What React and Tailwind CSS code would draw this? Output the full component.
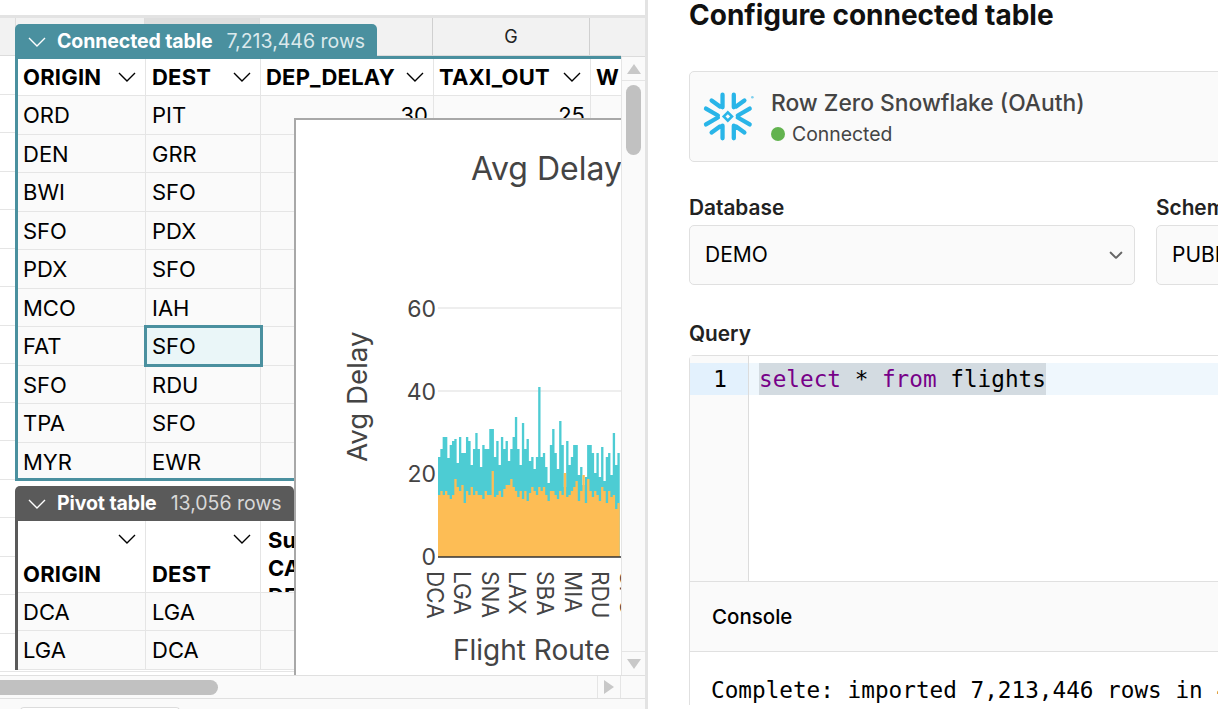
import React from "react";

const rows = [
  ["ORD", "PIT"], ["DEN", "GRR"], ["BWI", "SFO"], ["SFO", "PDX"], ["PDX", "SFO"],
  ["MCO", "IAH"], ["FAT", "SFO"], ["SFO", "RDU"], ["TPA", "SFO"], ["MYR", "EWR"],
];

// bar tops, read off the reference in px above the axis
const tealBars = [
  100, 108, 120, 120, 99, 112, 116, 118, 94, 120, 104, 104, 120, 116, 92, 108, 124, 108, 90, 112,
  108, 108, 128, 128, 100, 116, 92, 120, 108, 116, 96, 108, 120, 140, 108, 92, 134, 108, 118, 96,
  100, 88, 100, 170, 100, 104, 90, 74, 112, 128, 104, 88, 136, 112, 70, 116, 92, 100, 112, 112,
  82, 90, 72, 80, 112, 112, 104, 84, 104, 80, 110, 76, 100, 104, 82, 124, 92, 104,
];
const orangeBars = [
  62, 66, 62, 66, 62, 58, 62, 78, 70, 66, 72, 54, 66, 62, 70, 62, 66, 62, 62, 58,
  66, 62, 62, 86, 60, 62, 66, 60, 68, 72, 72, 78, 70, 66, 60, 66, 58, 66, 56, 64,
  70, 66, 62, 70, 66, 70, 62, 56, 66, 66, 62, 58, 66, 62, 84, 60, 62, 66, 70, 76,
  56, 66, 82, 54, 78, 66, 60, 66, 62, 56, 70, 66, 54, 66, 60, 62, 48, 54,
];

// one stepped outline per series, so no seams show between bars
const stepPath = (bars) => {
  const step = 2.33;
  let d = "M438 557";
  bars.forEach((h, i) => {
    const x = 438 + i * step;
    d += `L${x} ${557 - h}L${x + step} ${557 - h}`;
  });
  return d + `L${438 + bars.length * step} 557Z`;
};

const Chevron = ({ className = "", weight = 1.4 }) => (
  <svg viewBox="0 0 18 10" className={`w-[18px] h-[10px] ${className}`} fill="none" stroke="currentColor" strokeWidth={weight}>
    <polyline points="1,1 9,9 17,1" />
  </svg>
);

const SnowflakeLogo = () => (
  <svg viewBox="28 30 155 160" className="w-[52px] h-[53px] shrink-0" fill="none" stroke="#29b5e8" strokeWidth="13" strokeLinecap="round">
    <path d="M86 44V82M120 44V82M53 62L78 80M152 62L127 80" />
    <path d="M86 176V138M120 176V138M53 158L78 140M152 158L127 140" />
    <path d="M36 86L72 107M36 134L72 113M168 86L132 107M168 134L132 113" />
    <path d="M102 92L120 110L102 128L84 110Z" stroke="none" fill="#29b5e8" />
    <path d="M102 103L109 110L102 117L95 110Z" stroke="none" fill="#fafafa" />
    <circle cx="176" cy="52" r="4" stroke="none" fill="#7fd0ee" />
  </svg>
);

const Cell = ({ className = "", children }) => (
  <div className={`h-full flex items-center pt-[2px] px-[5px] border-r border-[#e5e5e5] overflow-hidden shrink-0 ${className}`}>
    {children}
  </div>
);

const HeaderCell = ({ width, label }) => (
  <div className={`h-full flex items-center justify-between pl-[5px] pr-[9px] border-r border-[#e5e5e5] shrink-0 font-bold tracking-[0.2px] ${width}`}>
    <span>{label}</span>
    <Chevron />
  </div>
);

const ConnectedTable = () => (
  <div className="w-[606px]">
    <div className="w-[362px] h-[32px] pt-[4px] rounded-t-[5px] bg-[#4a909f] flex items-center text-white pl-[13px] text-[19.5px]">
      <Chevron className="mr-[11px]" />
      <span className="font-bold tracking-[-0.1px]">Connected table</span>
      <span className="ml-[14px] text-[#dbe9ec]">7,213,446 rows</span>
    </div>
    <div className="h-[425px] overflow-hidden border-t-[3px] border-l-[3px] border-b-[3px] border-[#4a909f] text-[22px] text-black bg-[#fafafa]">
      <div className="flex h-[37px] bg-white border-b border-[#e5e5e5]">
        <HeaderCell width="w-[128px]" label="ORIGIN" />
        <HeaderCell width="w-[115px] pl-[6px]" label="DEST" />
        <HeaderCell width="w-[173px]" label="DEP_DELAY" />
        <HeaderCell width="w-[157px]" label="TAXI_OUT" />
        <div className="pl-[5px] font-bold flex items-center">W</div>
      </div>
      {rows.map((r, i) => (
        <div key={i} className="flex h-[38.5px] border-b border-[#e5e5e5]">
          <Cell className="w-[128px]">{r[0]}</Cell>
          <Cell className={i === 6 ? "w-[115px] pl-[6px] relative bg-[#eaf6f8] outline-[3px] -outline-offset-1 outline-[#4a909f]" : "w-[115px] pl-[6px]"}>{r[1]}</Cell>
          <Cell className="w-[173px] justify-end">{i === 0 ? "30" : ""}</Cell>
          <Cell className="w-[157px] justify-end">{i === 0 ? "25" : ""}</Cell>
        </div>
      ))}
    </div>
  </div>
);

const PivotTable = () => (
  <div className="w-[279px] mt-[5px]">
    <div className="h-[32px] pt-[4px] rounded-t-[5px] bg-[#5a5a5a] flex items-center text-white pl-[13px] text-[19.5px]">
      <Chevron className="mr-[11px]" />
      <span className="font-bold tracking-[-0.1px]">Pivot table</span>
      <span className="ml-[14px] text-[#d8d8d8]">13,056 rows</span>
    </div>
    <div className="border-t-[3px] border-l-[3px] border-[#5a5a5a] text-[22px] text-black bg-[#fafafa]">
      <div className="flex h-[71.5px] bg-white border-b border-[#e5e5e5] font-bold tracking-[0.2px]">
        {[["ORIGIN", "w-[128px] pl-[5px]"], ["DEST", "w-[115px] pl-[6px]"]].map(([label, w]) => (
          <div key={label} className={`relative h-full flex items-end pb-[1px] border-r border-[#e5e5e5] shrink-0 ${w}`}>
            <Chevron className="absolute right-[9px] top-[13px]" />
            {label}
          </div>
        ))}
        <div className="pl-[7px] pt-[5px] leading-[28px] whitespace-nowrap h-full overflow-hidden">
          Sum of<br />CANCELLED<br />DELAY
        </div>
      </div>
      {[["DCA", "LGA"], ["LGA", "DCA"]].map((r) => (
        <div key={r[0]} className="flex h-[38.5px] border-b border-[#e5e5e5]">
          <Cell className="w-[128px]">{r[0]}</Cell>
          <Cell className="w-[115px] pl-[6px]">{r[1]}</Cell>
        </div>
      ))}
    </div>
  </div>
);

const ChartWindow = () => (
  <div className="absolute left-[294px] top-[100px] w-[327px] h-[560px] bg-white border-l-2 border-t-2 border-[#a8a8a8] overflow-hidden">
    <svg viewBox="296 120 325 558" width="325" height="558" fontFamily="Inter, sans-serif" fill="#444">
      <text x="471" y="180" fontSize="32">Avg Delay by Route</text>
      <text transform="translate(367 462) rotate(-90)" fontSize="27.7">Avg Delay</text>
      {[308, 391].map((y) => (
        <line key={y} x1="438" x2="621" y1={y} y2={y} stroke="#eeeeee" strokeWidth="2" />
      ))}
      {[[60, 317], [40, 400], [20, 482], [0, 565]].map(([v, y]) => (
        <text key={v} x="436" y={y} fontSize="23" textAnchor="end">{v}</text>
      ))}
      <path d={stepPath(tealBars)} fill="#4dccd3" />
      <path d={stepPath(orangeBars)} fill="#fdbd55" />
      <line x1="438" x2="621" y1="557" y2="557" stroke="#333" strokeWidth="1.5" />
      {[["DCA", 427], ["LGA", 454], ["SNA", 482], ["LAX", 509], ["SBA", 537], ["MIA", 565], ["RDU", 592], ["SFO", 620]].map(([t, x]) => (
        <text key={t} transform={`translate(${x} 571) rotate(90)`} fontSize="22.5">{t}</text>
      ))}
      <text x="453" y="660" fontSize="28">Flight Route</text>
    </svg>
  </div>
);

const Triangle = ({ points }) => (
  <svg viewBox="0 0 14 12" className="w-[14px] h-[12px]" fill="#c8c8c8"><polygon points={points} /></svg>
);

const Spreadsheet = () => (
  <div className="w-[648px] shrink-0 border-r-[3px] border-[#e3e3e3] flex flex-col h-full">
    <div className="h-[15px] bg-white shrink-0" />
    <div className="h-[660px] border-t-[3px] border-[#e3e3e3] flex shrink-0">
      <div className="relative w-[621px] overflow-hidden bg-white">
        {/* sheet behind the tables */}
        <div className="flex h-[38px] bg-[#f2f2f2] border-b border-[#dcdcdc]">
          <div className="w-[16px] border-r border-[#dcdcdc]" />
          <div className="w-[129px] border-r border-[#dcdcdc]" />
          <div className="w-[115px] bg-[#dedede] border-r border-[#dcdcdc]" />
          <div className="w-[173px] border-r border-[#d0d0d0]" />
          <div className="w-[157px] border-r border-[#d0d0d0] flex items-center justify-center text-[18px] text-[#222]">G</div>
        </div>
        {Array.from({ length: 16 }, (_, i) => (
          <div key={i} className="h-[38.5px] border-b border-[#e5e5e5]" />
        ))}
        <div className="absolute left-[15px] top-[6px]">
          <ConnectedTable />
          <PivotTable />
        </div>
        <ChartWindow />
      </div>
      <div className="w-[24px] flex flex-col items-center bg-[#fafafa]">
        <div className="h-[39px] w-full bg-[#f2f2f2] border-b border-[#dcdcdc] shrink-0" />
        <div className="h-[24px] w-full border-l border-b border-[#e5e5e5] flex items-center justify-center shrink-0"><Triangle points="7,1 14,11 0,11" /></div>
        <div className="flex-1 w-full px-[4px] pt-[4px] border-l border-[#e5e5e5]">
          <div className="h-[70px] rounded-full bg-[#c1c1c1]" />
        </div>
        <div className="h-[24px] w-full border-l border-t border-[#e5e5e5] flex items-center justify-center shrink-0"><Triangle points="0,1 14,1 7,11" /></div>
      </div>
    </div>
    <div className="h-[24px] shrink-0 border-y border-[#e0e0e0] bg-[#fafafa] flex">
      <div className="w-[597px] flex items-center">
        <div className="w-[218px] h-[15px] rounded-r-full bg-[#c1c1c1]" />
      </div>
      <div className="w-[24px] border-x border-[#e5e5e5] flex items-center justify-center">
        <svg viewBox="0 0 12 14" className="w-[12px] h-[14px]" fill="#c8c8c8"><polygon points="1,0 11,7 1,14" /></svg>
      </div>
    </div>
    <div className="flex-1 bg-[#fafafa] pl-[20px] pt-[8px]">
      <div className="w-[160px] h-[4px] border-t border-x rounded-t border-[#dcdcdc] bg-white" />
    </div>
  </div>
);

const ConfigPanel = () => (
  <div className="flex-1 overflow-hidden pl-[41px] text-[#222]">
    <div className="w-[1000px]">
      <h1 className="h-[30px] text-[28px] leading-[31px] font-bold text-[#111]">Configure connected table</h1>
      <div className="mt-[41px] h-[91px] border border-[#e0e0e0] rounded-[5px] bg-[#fafafa] flex items-center pl-[13px] gap-[16px]">
        <SnowflakeLogo />
        <div className="pt-[2px]">
          <div className="text-[22.8px] font-medium text-[#444] leading-[30px]">Row Zero Snowflake (OAuth)</div>
          <div className="flex items-center text-[19.4px] text-[#444] leading-[28px] mt-[2px]">
            <span className="w-[14px] h-[14px] rounded-full bg-[#62b34f] mr-[7px]" />
            Connected
          </div>
        </div>
      </div>
      <div className="flex gap-[21px] mt-[31px]">
        {["Database", "Schema"].map((label, i) => (
          <div key={label} className="w-[446px] shrink-0">
            <div className="h-[32px] pt-[1px] text-[20.8px] font-semibold leading-[28px]">{label}</div>
            <div className="h-[60px] border border-[#e0e0e0] rounded-[5px] bg-[#fafafa] flex items-center justify-between pl-[15px] pr-[9px] text-[21px] text-black">
              {i === 0 ? "DEMO" : "PUBLIC"}
              <Chevron className="text-[#666] scale-75" weight={2.6} />
            </div>
          </div>
        ))}
      </div>
      <div className="mt-[35px] h-[35px] text-[20.8px] font-semibold leading-[28px]">Query</div>
      <div className="border-l border-t border-[#e0e0e0] rounded-tl-[5px] font-['DejaVu_Sans_Mono',monospace] text-[22.7px]">
        <div className="flex h-[226px] border-b border-[#e0e0e0]">
          <div className="w-[59px] bg-[#fafafa] border-r border-[#dcdcdc] pt-[7px] shrink-0">
            <div className="h-[32px] bg-[#e3f1fd] text-right pr-[21px] leading-[32px] text-black">1</div>
          </div>
          <div className="flex-1 bg-white pt-[7px]">
            <div className="h-[32px] bg-[#eff7fd] pl-[10px] leading-[32px] whitespace-pre">
              <span className="bg-[#d3dbe1] inline-block h-[32px] text-black">
                <span className="text-[#770088]">select</span> * <span className="text-[#770088]">from</span> flights
              </span>
            </div>
          </div>
        </div>
        <div className="h-[70px] pt-[2px] bg-[#fafafa] border-b border-[#e0e0e0] flex items-center pl-[22px] font-['Inter',sans-serif] text-[20.5px] font-medium text-black">
          Console
        </div>
        <div className="pl-[21px] pt-[23px] leading-[30px] text-black whitespace-pre">Complete: imported 7,213,446 rows in 4.2s</div>
      </div>
    </div>
  </div>
);

export default function App() {
  return (
    <div className="flex w-[1218px] h-[709px] overflow-hidden bg-white font-['Inter',sans-serif]">
      <Spreadsheet />
      <ConfigPanel />
    </div>
  );
}
